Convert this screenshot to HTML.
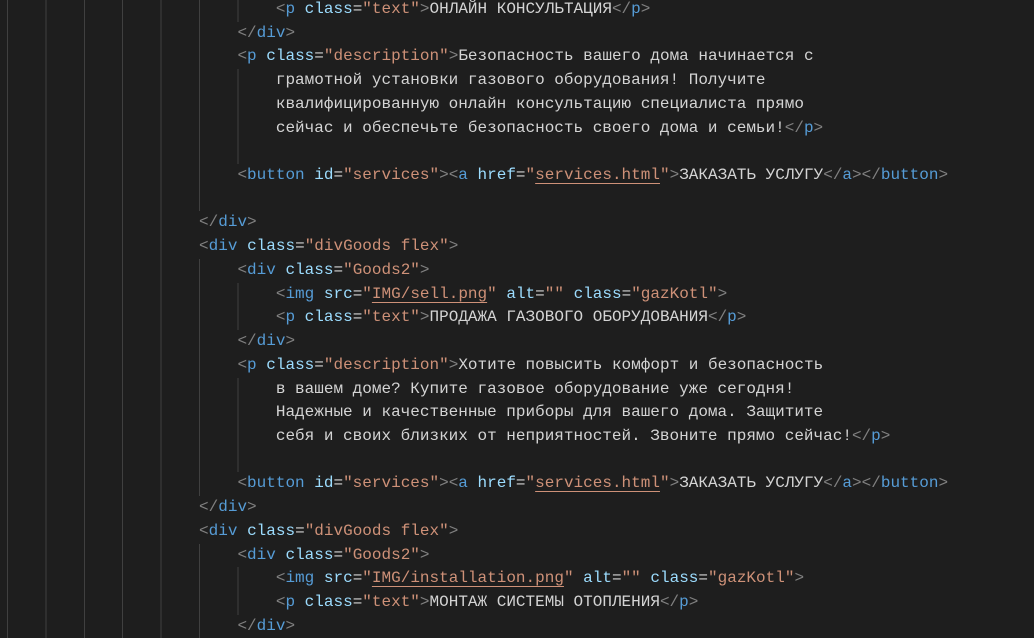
<!DOCTYPE html>
<html><head><meta charset="utf-8"><style>
body{margin:0;background:#1e1e1e;width:1034px;height:635px;overflow:hidden;position:relative}
#c{position:absolute;left:7px;top:-2px;font:16px/23.73px "Liberation Mono","DejaVu Sans Mono",monospace;color:#d4d4d4}
.l{height:23.73px;position:relative;white-space:pre}
.g{position:absolute;left:0;top:0;height:100%;background:repeating-linear-gradient(to right,#404040 0 1px,transparent 1px 38.4px)}
.t{position:relative}
.b{color:#808080}.n{color:#569cd6}.a{color:#9cdcfe}.s{color:#ce9178}.u{text-decoration:underline;text-decoration-color:#ce9178;text-underline-offset:4px}
</style></head><body>
<div id="c"><div class="l"><div class="g" style="width:269px"></div><span class="t">                            <span class="b">&lt;</span><span class="n">p</span> <span class="a">class</span>=<span class="s">"text"</span><span class="b">&gt;</span>ОНЛАЙН КОНСУЛЬТАЦИЯ<span class="b">&lt;/</span><span class="n">p</span><span class="b">&gt;</span></span></div><div class="l"><div class="g" style="width:230px"></div><span class="t">                        <span class="b">&lt;/</span><span class="n">div</span><span class="b">&gt;</span></span></div><div class="l"><div class="g" style="width:230px"></div><span class="t">                        <span class="b">&lt;</span><span class="n">p</span> <span class="a">class</span>=<span class="s">"description"</span><span class="b">&gt;</span>Безопасность вашего дома начинается с</span></div><div class="l"><div class="g" style="width:269px"></div><span class="t">                            грамотной установки газового оборудования! Получите</span></div><div class="l"><div class="g" style="width:269px"></div><span class="t">                            квалифицированную онлайн консультацию специалиста прямо</span></div><div class="l"><div class="g" style="width:269px"></div><span class="t">                            сейчас и обеспечьте безопасность своего дома и семьи!<span class="b">&lt;/</span><span class="n">p</span><span class="b">&gt;</span></span></div><div class="l"><div class="g" style="width:240px"></div></div><div class="l"><div class="g" style="width:230px"></div><span class="t">                        <span class="b">&lt;</span><span class="n">button</span> <span class="a">id</span>=<span class="s">"services"</span><span class="b">&gt;&lt;</span><span class="n">a</span> <span class="a">href</span>=<span class="s">"<span class="u">services.html</span>"</span><span class="b">&gt;</span>ЗАКАЗАТЬ УСЛУГУ<span class="b">&lt;/</span><span class="n">a</span><span class="b">&gt;&lt;/</span><span class="n">button</span><span class="b">&gt;</span></span></div><div class="l"><div class="g" style="width:200px"></div></div><div class="l"><div class="g" style="width:192px"></div><span class="t">                    <span class="b">&lt;/</span><span class="n">div</span><span class="b">&gt;</span></span></div><div class="l"><div class="g" style="width:192px"></div><span class="t">                    <span class="b">&lt;</span><span class="n">div</span> <span class="a">class</span>=<span class="s">"divGoods flex"</span><span class="b">&gt;</span></span></div><div class="l"><div class="g" style="width:230px"></div><span class="t">                        <span class="b">&lt;</span><span class="n">div</span> <span class="a">class</span>=<span class="s">"Goods2"</span><span class="b">&gt;</span></span></div><div class="l"><div class="g" style="width:269px"></div><span class="t">                            <span class="b">&lt;</span><span class="n">img</span> <span class="a">src</span>=<span class="s">"<span class="u">IMG/sell.png</span>"</span> <span class="a">alt</span>=<span class="s">""</span> <span class="a">class</span>=<span class="s">"gazKotl"</span><span class="b">&gt;</span></span></div><div class="l"><div class="g" style="width:269px"></div><span class="t">                            <span class="b">&lt;</span><span class="n">p</span> <span class="a">class</span>=<span class="s">"text"</span><span class="b">&gt;</span>ПРОДАЖА ГАЗОВОГО ОБОРУДОВАНИЯ<span class="b">&lt;/</span><span class="n">p</span><span class="b">&gt;</span></span></div><div class="l"><div class="g" style="width:230px"></div><span class="t">                        <span class="b">&lt;/</span><span class="n">div</span><span class="b">&gt;</span></span></div><div class="l"><div class="g" style="width:230px"></div><span class="t">                        <span class="b">&lt;</span><span class="n">p</span> <span class="a">class</span>=<span class="s">"description"</span><span class="b">&gt;</span>Хотите повысить комфорт и безопасность</span></div><div class="l"><div class="g" style="width:269px"></div><span class="t">                            в вашем доме? Купите газовое оборудование уже сегодня!</span></div><div class="l"><div class="g" style="width:269px"></div><span class="t">                            Надежные и качественные приборы для вашего дома. Защитите</span></div><div class="l"><div class="g" style="width:269px"></div><span class="t">                            себя и своих близких от неприятностей. Звоните прямо сейчас!<span class="b">&lt;/</span><span class="n">p</span><span class="b">&gt;</span></span></div><div class="l"><div class="g" style="width:240px"></div></div><div class="l"><div class="g" style="width:230px"></div><span class="t">                        <span class="b">&lt;</span><span class="n">button</span> <span class="a">id</span>=<span class="s">"services"</span><span class="b">&gt;&lt;</span><span class="n">a</span> <span class="a">href</span>=<span class="s">"<span class="u">services.html</span>"</span><span class="b">&gt;</span>ЗАКАЗАТЬ УСЛУГУ<span class="b">&lt;/</span><span class="n">a</span><span class="b">&gt;&lt;/</span><span class="n">button</span><span class="b">&gt;</span></span></div><div class="l"><div class="g" style="width:192px"></div><span class="t">                    <span class="b">&lt;/</span><span class="n">div</span><span class="b">&gt;</span></span></div><div class="l"><div class="g" style="width:192px"></div><span class="t">                    <span class="b">&lt;</span><span class="n">div</span> <span class="a">class</span>=<span class="s">"divGoods flex"</span><span class="b">&gt;</span></span></div><div class="l"><div class="g" style="width:230px"></div><span class="t">                        <span class="b">&lt;</span><span class="n">div</span> <span class="a">class</span>=<span class="s">"Goods2"</span><span class="b">&gt;</span></span></div><div class="l"><div class="g" style="width:269px"></div><span class="t">                            <span class="b">&lt;</span><span class="n">img</span> <span class="a">src</span>=<span class="s">"<span class="u">IMG/installation.png</span>"</span> <span class="a">alt</span>=<span class="s">""</span> <span class="a">class</span>=<span class="s">"gazKotl"</span><span class="b">&gt;</span></span></div><div class="l"><div class="g" style="width:269px"></div><span class="t">                            <span class="b">&lt;</span><span class="n">p</span> <span class="a">class</span>=<span class="s">"text"</span><span class="b">&gt;</span>МОНТАЖ СИСТЕМЫ ОТОПЛЕНИЯ<span class="b">&lt;/</span><span class="n">p</span><span class="b">&gt;</span></span></div><div class="l"><div class="g" style="width:230px"></div><span class="t">                        <span class="b">&lt;/</span><span class="n">div</span><span class="b">&gt;</span></span></div></div>
</body></html>
